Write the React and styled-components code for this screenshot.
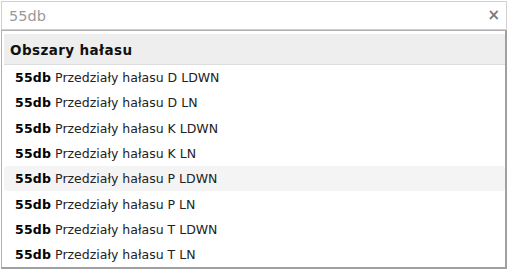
import React from "react";
import styled, { createGlobalStyle } from "styled-components";

const Global = createGlobalStyle`
  html, body {
    margin: 0;
    padding: 0;
    background: #fff;
  }
  body {
    font-family: "DejaVu Sans", Verdana, sans-serif;
  }
`;

const Page = styled.div`
  width: 508px;
  height: 270px;
  padding: 1px 1px 0 1px;
  box-sizing: border-box;
`;

const SearchBox = styled.div`
  height: 29px;
  box-sizing: border-box;
  border: 1px solid #d0d0d0;
  display: flex;
  align-items: center;
  padding: 0 6px 0 7px;
  font-size: 14.5px;
  color: #999;
`;

const Query = styled.span`
  flex: 1;
`;

const Clear = styled.span`
  color: #7a7a7a;
  font-size: 15px;
  font-weight: bold;
  line-height: 1;
`;

const Dropdown = styled.div`
  height: 239px;
  box-sizing: border-box;
  border: 1px solid #b0b0b0;
  border-right: 2px solid #a0a0a0;
  border-bottom: 2px solid #a0a0a0;
  padding: 3px 0 0 2px;
  overflow: hidden;
`;

const GroupTitle = styled.div`
  height: 31px;
  box-sizing: border-box;
  background: #eee;
  border-bottom: 1px solid #ddd;
  display: flex;
  align-items: center;
  padding: 1px 0 0 6px;
  font-size: 13.5px;
  font-weight: bold;
  letter-spacing: 0.4px;
  color: #111;
`;

const Option = styled.div`
  height: 25.3px;
  display: flex;
  align-items: center;
  padding-left: 11px;
  border-radius: 3px;
  font-size: 12.5px;
  color: #222;
  background: ${(p) => (p.$active ? "#f4f4f4" : "transparent")};
  b {
    color: #000;
    margin-right: 4px;
    letter-spacing: 0.2px;
  }
`;

const options = [
  "D LDWN",
  "D LN",
  "K LDWN",
  "K LN",
  "P LDWN",
  "P LN",
  "T LDWN",
  "T LN",
];

export default function App() {
  return (
    <>
      <Global />
      <Page>
        <SearchBox>
          <Query>55db</Query>
          <Clear>×</Clear>
        </SearchBox>
        <Dropdown>
          <GroupTitle>Obszary hałasu</GroupTitle>
          {options.map((o, i) => (
            <Option key={o} $active={i === 4}>
              <b>55db</b>Przedziały hałasu {o}
            </Option>
          ))}
        </Dropdown>
      </Page>
    </>
  );
}
